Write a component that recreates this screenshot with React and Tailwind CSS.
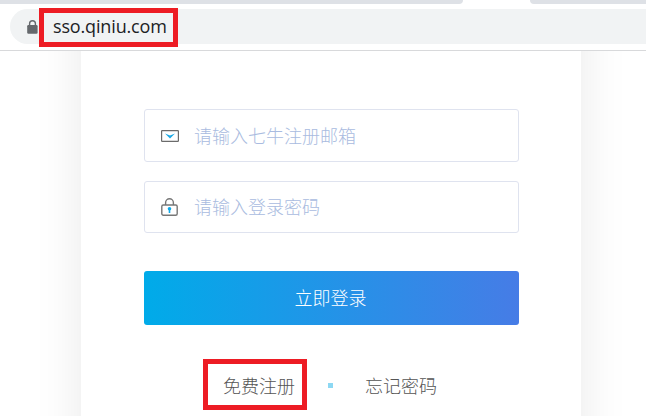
import React from "react";

function MailIcon() {
  return (
    <svg width="18" height="12" viewBox="0 0 18 12" fill="none" className="block">
      <rect x="0.6" y="0.6" width="16.8" height="10.8" rx="0.6" stroke="#6b6b6b" strokeWidth="1.2" />
      <path d="M4 3.4 9 5.6 14 3.4 9 8.4Z" fill="#1aa9e6" />
    </svg>
  );
}

function PasswordIcon() {
  return (
    <svg width="18" height="18" viewBox="0 0 18 18" fill="none" className="block">
      <path d="M4.6 7V4.8A3.9 4 0 0 1 12.4 4.8V7" stroke="#777" strokeWidth="1.4" />
      <rect x="0.8" y="7" width="15.4" height="10.3" rx="1.5" stroke="#777" strokeWidth="1.4" />
      <circle cx="8.5" cy="10.8" r="1.8" fill="#0ba8ea" />
      <path d="M8.5 11v4" stroke="#0ba8ea" strokeWidth="1.6" />
    </svg>
  );
}

function AddressLock() {
  return (
    <svg width="11" height="14" viewBox="0 0 11 14" fill="none" className="block">
      <path d="M2.6 6V3.6a2.9 2.9 0 0 1 5.8 0V6" stroke="#65686c" strokeWidth="1.4" />
      <rect x="0.2" y="5" width="10.4" height="8.8" rx="1.2" fill="#65686c" />
    </svg>
  );
}

function Field({ icon, label, className }) {
  return (
    <div className={`flex w-[375px] items-center rounded-[3px] border border-[#dfe3ef] bg-white pl-4 ${className}`}>
      <span className="w-[33px] shrink-0">{icon}</span>
      <span className="pb-0.5 text-[18px] leading-[26px] font-light whitespace-nowrap text-[#a9bbe0]">{label}</span>
    </div>
  );
}

export default function App() {
  return (
    <div className="flex h-[416px] w-[646px] flex-col overflow-hidden bg-white font-['Noto_Sans_CJK_SC',sans-serif]">
      <div className="flex h-1 shrink-0 justify-between overflow-hidden">
        <div className="h-1 w-[463px] rounded-br-[8px] bg-[#dee1e6]" />
        <div className="h-1 w-[116px] rounded-bl-[8px] bg-[#dee1e6]" />
      </div>
      <header className="h-[47px] shrink-0 border-b border-[#d8d9db] pt-[5px] pl-[10px]">
        <div className="flex h-[35px] items-center rounded-l-full bg-[#f1f3f4] pl-[17px]">
          <AddressLock />
          <div className="mt-0.5 ml-px flex h-[39px] w-[139px] shrink-0 items-center border-[5px] border-[#ed1c24] pb-[3px] pl-[9px]">
            <span className="font-['Open_Sans',sans-serif] text-[18px] leading-6 tracking-[-0.15px] whitespace-nowrap text-[#202124]">sso.qiniu.com</span>
          </div>
        </div>
      </header>
      <main className="flex-1 overflow-hidden">
        <section className="-mt-[100px] ml-[81px] flex h-[600px] w-[500px] flex-col bg-white px-[63px] pt-[158px] shadow-[0_0_46px_rgba(0,0,0,0.09)]">
          <Field icon={<MailIcon />} label="请输入七牛注册邮箱" className="h-[53px]" />
          <Field icon={<PasswordIcon />} label="请输入登录密码" className="mt-[19px] h-[52px]" />
          <button className="mt-[38px] h-[54px] w-[375px] rounded-[3px] bg-linear-to-r/srgb from-[#00abe9] to-[#467ce6] pr-0.5 pb-0.5 text-[18px] font-light text-white">
            立即登录
          </button>
          <div className="mt-[34px] ml-[59px] flex h-[51px] items-center text-[18px] leading-[26px] font-light whitespace-nowrap text-[#555]">
            <div className="flex h-[51px] w-[104px] items-center border-[5px] border-[#ed1c24] pl-[15px]">
              <a>免费注册</a>
            </div>
            <span className="mt-0.5 ml-[21px] h-[5px] w-[5px] bg-[#8dd8f3]" />
            <a className="ml-8">忘记密码</a>
          </div>
        </section>
      </main>
    </div>
  );
}
